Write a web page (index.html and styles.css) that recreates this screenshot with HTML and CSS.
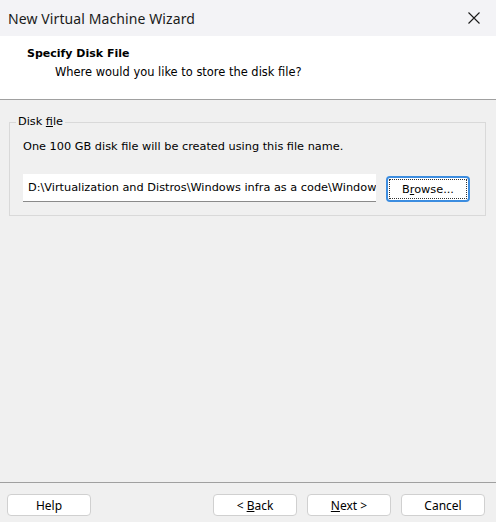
FILE: index.html
```html
<!DOCTYPE html>
<html>
<head>
<meta charset="utf-8">
<link rel="stylesheet" href="styles.css">
</head>
<body>
<div class="window">
  <div class="titlebar">
    <span class="title">New Virtual Machine Wizard</span>
    <svg class="close" width="12" height="12" viewBox="0 0 12 12"><path d="M0.5 0.5 L11.5 11.5 M11.5 0.5 L0.5 11.5" stroke="#1a1a1a" stroke-width="1.1" fill="none"/></svg>
  </div>
  <div class="header">
    <div class="h-title">Specify Disk File</div>
    <div class="h-sub">Where would you like to store the disk file?</div>
  </div>
  <div class="content">
    <div class="group">
      <span class="legend">Disk <u>f</u>ile</span>
      <p class="desc">One 100 GB disk file will be created using this file name.</p>
      <div class="row">
        <div class="input">D:\Virtualization and Distros\Windows infra as a code\Windows Server 2022.vmdk</div>
        <button class="btn browse"><span class="focus"><span>B<u>r</u>owse...</span></span></button>
      </div>
    </div>
  </div>
  <div class="footer">
    <button class="btn"><span>Help</span></button>
    <div class="spacer"></div>
    <button class="btn"><span>&lt; <u>B</u>ack</span></button>
    <button class="btn"><span><u>N</u>ext &gt;</span></button>
    <button class="btn"><span>Cancel</span></button>
  </div>
</div>
</body>
</html>
```

FILE: styles.css
```css
* { box-sizing: border-box; }
html, body { margin: 0; padding: 0; }
body { width: 496px; height: 522px; overflow: hidden; background: #f0f0f0; }
.window {
  width: 496px; height: 522px;
  display: flex; flex-direction: column;
  background: #f0f0f0;
  font-family: "DejaVu Sans", sans-serif;
  font-size: 11.3px;
  color: #000;
}
.titlebar {
  height: 36px; flex: none;
  display: flex; align-items: center; justify-content: space-between;
  background: #f3f3f6;
  padding: 0 16px 0 8px;
}
.title { font-family: "Noto Sans", sans-serif; font-size: 14px; letter-spacing: 0.1px; color: #1a1a1a; }
.close { display: block; margin-top: -1px; }
.header {
  height: 64px; flex: none;
  background: #fff;
  border-bottom: 1px solid #a0a0a0;
  padding: 10px 0 0 27px;
}
.h-title { font-weight: bold; font-size: 11px; line-height: 16px; }
.h-sub { padding-left: 28px; line-height: 16px; margin-top: 2px; font-size: 11.45px; }
.content { flex: 1; padding: 22px 10px 0 9px; }
.group {
  position: relative;
  padding: 16px 0 13px 13px;
  border: 1px solid #d9d9d9;
}
.legend {
  position: absolute; top: -8px; left: 6px;
  padding: 0 2px;
  line-height: 14px;
  background: #f0f0f0;
}
.desc { margin: 0; line-height: 16px; }
.row { display: flex; align-items: flex-start; margin-top: 19px; gap: 10px; }
.input {
  width: 353px; height: 28px; flex: none;
  background: #fff;
  border-bottom: 1px solid #8a8a8a;
  padding: 0 5px;
  line-height: 27px;
  white-space: nowrap; overflow: hidden;
}
.btn {
  width: 84px; height: 22px; flex: none;
  background: #fff;
  border: 1px solid #d0d0d0;
  border-radius: 4px;
  font-family: "Noto Sans", sans-serif;
  font-size: 12px;
  color: #000;
  padding: 0;
  display: flex; align-items: center; justify-content: center;
}
.browse {
  width: 84px; height: 26px;
  margin-top: 2px;
  border: 2px solid #3c8de0;
  border-radius: 4px;
  padding: 1px;
}
.browse .focus {
  width: 100%; height: 100%;
  border: 1px dotted #333;
  display: flex; align-items: center; justify-content: center;
  font-family: "DejaVu Sans", sans-serif; font-size: 11.3px;
}
.footer {
  height: 40px; flex: none;
  border-top: 1px solid #a0a0a0;
  display: flex; align-items: flex-start;
  padding: 11px 11px 0 7px;
  gap: 10px;
}
.spacer { flex: 1; }
```
